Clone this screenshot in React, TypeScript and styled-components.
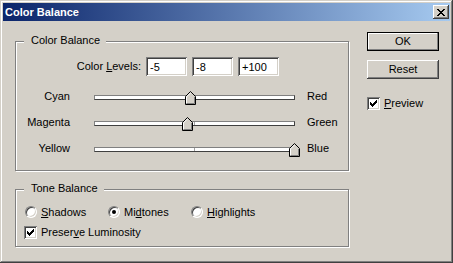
import React from 'react';
import styled, { createGlobalStyle, css } from 'styled-components';

const GlobalStyle = createGlobalStyle`
  html, body {
    margin: 0;
    padding: 0;
    background: #d4d0c8;
  }
  body {
    font-family: 'Liberation Sans', Arial, sans-serif;
    font-size: 11px;
    line-height: 13px;
    color: #000;
  }
`;

const raised = css`
  box-shadow: inset -1px -1px #404040, inset 1px 1px #fff,
    inset -2px -2px #808080, inset 2px 2px #d4d0c8;
`;

const sunken = css`
  box-shadow: inset 1px 1px #808080, inset -1px -1px #fff,
    inset 2px 2px #404040, inset -2px -2px #d4d0c8;
`;

const Window = styled.div`
  width: 453px;
  height: 263px;
  box-sizing: border-box;
  padding: 3px;
  background: #d4d0c8;
  box-shadow: inset -1px -1px #404040, inset 1px 1px #d4d0c8,
    inset -2px -2px #808080, inset 2px 2px #fff;
  display: flex;
  flex-direction: column;
`;

const TitleBar = styled.div`
  height: 18px;
  flex-shrink: 0;
  display: flex;
  align-items: center;
  justify-content: space-between;
  padding: 0 1px 0 2px;
  background: linear-gradient(to right, #0a246a, #a6caf0);
`;

const Title = styled.span`
  color: #fff;
  font-weight: bold;
  font-size: 11px;
`;

const CloseButton = styled.div`
  width: 16px;
  height: 14px;
  background: #d4d0c8;
  display: flex;
  align-items: center;
  justify-content: center;
  ${raised}
`;

const Content = styled.div`
  display: flex;
  gap: 18px;
  padding: 11px 0 0 12px;
`;

const LeftColumn = styled.div`
  width: 334px;
  display: flex;
  flex-direction: column;
  gap: 18px;
  padding-top: 9px;
`;

const Group = styled.div<{ $height: number }>`
  position: relative;
  box-sizing: border-box;
  height: ${(p) => p.$height}px;
  border: 1px solid #808080;
  box-shadow: inset 1px 1px #fff, 1px 1px #fff;
`;

const Legend = styled.span`
  position: absolute;
  left: 8px;
  top: -8px;
  padding: 0 6px 0 7px;
  background: #d4d0c8;
`;

const ColorGroupBody = styled.div`
  padding-top: 15px;
`;

const LevelsRow = styled.div`
  display: flex;
  align-items: center;
  height: 19px;
  margin-bottom: 7px;
`;

const LevelsLabel = styled.span`
  width: 125px;
  margin-right: 5px;
  text-align: right;
`;

const Fields = styled.div`
  display: flex;
  gap: 5px;
`;

const Field = styled.input`
  width: 41px;
  height: 19px;
  box-sizing: border-box;
  border: none;
  outline: none;
  margin: 0;
  padding: 0 0 0 4px;
  background: #fff;
  font: inherit;
  color: #000;
  ${sunken}
`;

const SliderRow = styled.div`
  display: flex;
  align-items: center;
  height: 26px;
`;

const SideLabel = styled.span`
  width: 54px;
  text-align: right;
`;

const SliderArea = styled.div`
  position: relative;
  width: 201px;
  height: 14px;
  margin: 4px 12px 0 24px;
`;

const Track = styled.div`
  position: relative;
  margin-top: 4px;
  height: 5px;
  box-sizing: border-box;
  background: #fff;
  border: 1px solid #404040;
  border-top-color: #808080;
  border-left-color: #808080;
  &::after {
    content: '';
    position: absolute;
    left: 99px;
    top: 0;
    width: 1px;
    height: 3px;
    background: #a0a0a0;
  }
`;

const Thumb = styled.svg`
  position: absolute;
  top: 0;
  display: block;
`;

const ToneBody = styled.div`
  padding-top: 14px;
`;

const RadioRow = styled.div`
  display: flex;
  align-items: center;
  height: 16px;
  padding-left: 9px;
  margin-bottom: 4px;
`;

const RadioOption = styled.label`
  width: 83px;
  display: flex;
  align-items: center;
  gap: 4px;
`;

const RadioCircle = styled.span<{ $on?: boolean }>`
  width: 12px;
  height: 12px;
  box-sizing: border-box;
  border-radius: 50%;
  background: #fff;
  border: 1px solid;
  border-color: #808080 #fff #fff #808080;
  box-shadow: inset 1px 1px #404040, inset -1px -1px #d4d0c8;
  display: flex;
  align-items: center;
  justify-content: center;
  &::after {
    content: '';
    display: ${(p) => (p.$on ? 'block' : 'none')};
    width: 4px;
    height: 4px;
    border-radius: 50%;
    background: #000;
  }
`;

const CheckRow = styled.label<{ $indent: number }>`
  display: flex;
  align-items: center;
  gap: 4px;
  height: 16px;
  padding-left: ${(p) => p.$indent}px;
`;

const CheckBox = styled.span`
  width: 13px;
  height: 13px;
  flex-shrink: 0;
  background: #fff;
  display: flex;
  align-items: center;
  justify-content: center;
  ${sunken}
`;

const RightColumn = styled.div`
  width: 72px;
  display: flex;
  flex-direction: column;
`;

const Button = styled.button<{ $default?: boolean }>`
  width: 72px;
  height: 19px;
  margin: 0 0 9px 0;
  padding: 0;
  border: none;
  background: #d4d0c8;
  font: inherit;
  color: #000;
  ${(p) =>
    p.$default
      ? css`
          box-shadow: inset 0 0 0 1px #000, inset -2px -2px #808080,
            inset 2px 2px #fff;
        `
      : raised}
`;

const PreviewRow = styled.div`
  margin-top: 7px;
`;

const closePixels = [
  'XX....XX',
  '.XX..XX.',
  '..XXXX..',
  '...XX...',
  '..XXXX..',
  '.XX..XX.',
  'XX....XX',
];

function CloseGlyph() {
  return (
    <svg width="8" height="7" viewBox="0 0 8 7" shapeRendering="crispEdges">
      {closePixels.map((row, y) =>
        row.split('').map((c, x) =>
          c === 'X' ? <rect key={`${x}-${y}`} x={x} y={y} width="1" height="1" fill="#000" /> : null
        )
      )}
    </svg>
  );
}

const checkPixels = [
  '......X',
  '.....XX',
  'X...XXX',
  'XX.XXX.',
  'XXXXX..',
  '.XXX...',
  '..X....',
];

function CheckMark() {
  return (
    <svg width="7" height="7" viewBox="0 0 7 7" shapeRendering="crispEdges">
      {checkPixels.map((row, y) =>
        row.split('').map((c, x) =>
          c === 'X' ? <rect key={`${x}-${y}`} x={x} y={y} width="1" height="1" fill="#000" /> : null
        )
      )}
    </svg>
  );
}

function Slider({ value }: { value: number }) {
  const left = Math.round(-4 + (value + 100) * 0.995);
  return (
    <SliderArea>
      <Track />
      <Thumb width="11" height="14" viewBox="0 0 11 14" style={{ left }}>
        <polygon points="0.5,5.5 5.5,0.5 10.5,5.5 10.5,13.5 0.5,13.5" fill="#d4d0c8" stroke="#000" />
        <polyline points="1.5,12.5 1.5,5.9 5.5,1.9" fill="none" stroke="#fff" />
        <polyline points="9.5,6 9.5,12.5 1.5,12.5" fill="none" stroke="#808080" />
      </Thumb>
    </SliderArea>
  );
}

const sliders = [
  { left: 'Cyan', right: 'Red', value: -5 },
  { left: 'Magenta', right: 'Green', value: -8 },
  { left: 'Yellow', right: 'Blue', value: 100 },
];

export default function App() {
  return (
    <>
      <GlobalStyle />
      <Window>
        <TitleBar>
          <Title>Color Balance</Title>
          <CloseButton>
            <CloseGlyph />
          </CloseButton>
        </TitleBar>
        <Content>
          <LeftColumn>
            <Group $height={130}>
              <Legend>Color Balance</Legend>
              <ColorGroupBody>
                <LevelsRow>
                  <LevelsLabel>
                    Color <u>L</u>evels:
                  </LevelsLabel>
                  <Fields>
                    <Field defaultValue="-5" />
                    <Field defaultValue="-8" />
                    <Field defaultValue="+100" />
                  </Fields>
                </LevelsRow>
                {sliders.map((s) => (
                  <SliderRow key={s.left}>
                    <SideLabel>{s.left}</SideLabel>
                    <Slider value={s.value} />
                    <span>{s.right}</span>
                  </SliderRow>
                ))}
              </ColorGroupBody>
            </Group>
            <Group $height={58}>
              <Legend>Tone Balance</Legend>
              <ToneBody>
                <RadioRow>
                  <RadioOption>
                    <RadioCircle />
                    <span>
                      <u>S</u>hadows
                    </span>
                  </RadioOption>
                  <RadioOption>
                    <RadioCircle $on />
                    <span>
                      Mi<u>d</u>tones
                    </span>
                  </RadioOption>
                  <RadioOption>
                    <RadioCircle />
                    <span>
                      <u>H</u>ighlights
                    </span>
                  </RadioOption>
                </RadioRow>
                <CheckRow $indent={8}>
                  <CheckBox>
                    <CheckMark />
                  </CheckBox>
                  <span>
                    Preser<u>v</u>e Luminosity
                  </span>
                </CheckRow>
              </ToneBody>
            </Group>
          </LeftColumn>
          <RightColumn>
            <Button $default>OK</Button>
            <Button>Reset</Button>
            <PreviewRow>
              <CheckRow $indent={0}>
                <CheckBox>
                  <CheckMark />
                </CheckBox>
                <span>
                  <u>P</u>review
                </span>
              </CheckRow>
            </PreviewRow>
          </RightColumn>
        </Content>
      </Window>
    </>
  );
}
